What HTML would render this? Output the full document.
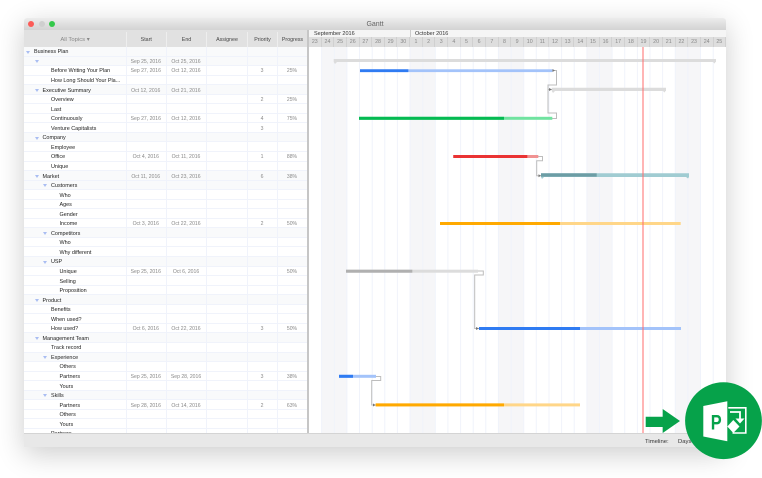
<!DOCTYPE html>
<html><head><meta charset="utf-8"><title>Gantt</title>
<style>
html,body{margin:0;padding:0;width:762px;height:478px;background:#fff;overflow:hidden;font-family:"Liberation Sans",sans-serif}
#win{position:absolute;left:24px;top:18px;width:702px;height:429px;background:#fff;box-shadow:0 7px 28px rgba(0,0,0,.2);overflow:hidden;border-radius:3px 3px 0 0;filter:blur(.25px)}
#win{overflow:visible}
#win>*{position:absolute}
#tb{left:0;top:0;width:702px;height:12px;background:linear-gradient(#ececec,#d3d3d3);border-radius:3px 3px 0 0}
.l{position:absolute;top:2.7px;width:6px;height:6px;border-radius:50%}
#ttl{position:absolute;left:0;width:702px;text-align:center;top:2px;font-size:7px;line-height:9px;color:#666}
#hd{left:0;top:12px;width:283px;height:17px;background:#e1e1e1;font-size:5.3px;color:#444;line-height:17px}
#hd span{position:absolute;top:1.5px;height:15.5px;text-align:center;border-left:1px solid #eee;box-sizing:border-box}
#rows{left:0;top:29px;width:283px;height:386px;overflow:hidden;font-size:5.45px;line-height:9.55px;color:#222}
.r{position:relative;height:9.55px;box-sizing:border-box;border-bottom:1px solid #f0f3fb;white-space:nowrap}
.g{background:#f9fafb}
.r b{font-weight:normal;position:absolute;top:1.4px}
.r i{font-style:normal;position:absolute;top:1.4px;color:#888;text-align:center;font-size:5.1px}
.s{left:101.5px;width:40.5px}.e{left:142px;width:40px}.p{left:223px;width:30px}.q{left:253px;width:30px}
.a:before{content:"";position:absolute;top:2.2px;margin-left:-7.8px;border:2px solid transparent;border-top:3px solid #a9bdf2;border-bottom:0}
.v{position:absolute;top:29px;width:1px;height:386px;background:#f0f3fb}
#sp{left:283px;top:12px;width:2px;height:403px;background:#c6c6c6}
#mo{left:285px;top:12px;width:417px;height:7px;background:#f5f5f5;font-size:5.5px;line-height:8.5px;color:#333}
#mo span{position:absolute;top:0}
#dy{left:285px;top:19px;width:417px;height:10px;display:flex;background:#dedede}
#dy span{flex:1;text-align:center;font-size:5.3px;line-height:10.5px;color:#888;border-right:1px solid #d0d0d0;box-sizing:border-box}
#ch{left:285px;top:29px}
#ft{left:0;top:415px;width:702px;height:14px;background:#e8e8e8;border-top:1px solid #d4d4d4;box-sizing:border-box;font-size:5.9px;line-height:17px;color:#333}
#ft span{position:absolute;top:0}
#ic{position:absolute;left:640px;top:378px}
</style></head><body>
<div id="win">
<div id="tb"><div class="l" style="left:4.3px;background:#fc5b57"></div><div class="l" style="left:14.5px;background:#cfcfcf"></div><div class="l" style="left:24.7px;background:#34c84a"></div><div id="ttl">Gantt</div></div>
<div id="hd"><span style="left:0;width:102px;border:0;color:#888;font-size:5.9px">All Topics &#9662;</span><span style="left:101.5px;width:40.5px">Start</span><span style="left:142px;width:40px">End</span><span style="left:182px;width:41px">Assignee</span><span style="left:223px;width:30px">Priority</span><span style="left:253px;width:30px">Progress</span></div>
<div id="rows">
<div class="r g"><b class="a" style="left:10px">Business Plan</b></div>
<div class="r g"><b class="a" style="left:18.5px"></b><i class="s">Sep 25, 2016</i><i class="e">Oct 25, 2016</i></div>
<div class="r"><b style="left:27px">Before Writing Your Plan</b><i class="s">Sep 27, 2016</i><i class="e">Oct 12, 2016</i><i class="p">3</i><i class="q">25%</i></div>
<div class="r"><b style="left:27px">How Long Should Your Pla...</b></div>
<div class="r g"><b class="a" style="left:18.5px">Executive Summary</b><i class="s">Oct 12, 2016</i><i class="e">Oct 21, 2016</i></div>
<div class="r"><b style="left:27px">Overview</b><i class="p">2</i><i class="q">25%</i></div>
<div class="r"><b style="left:27px">Last</b></div>
<div class="r"><b style="left:27px">Continuously</b><i class="s">Sep 27, 2016</i><i class="e">Oct 12, 2016</i><i class="p">4</i><i class="q">75%</i></div>
<div class="r"><b style="left:27px">Venture Capitalists</b><i class="p">3</i></div>
<div class="r g"><b class="a" style="left:18.5px">Company</b></div>
<div class="r"><b style="left:27px">Employee</b></div>
<div class="r"><b style="left:27px">Office</b><i class="s">Oct 4, 2016</i><i class="e">Oct 11, 2016</i><i class="p">1</i><i class="q">88%</i></div>
<div class="r"><b style="left:27px">Unique</b></div>
<div class="r g"><b class="a" style="left:18.5px">Market</b><i class="s">Oct 11, 2016</i><i class="e">Oct 23, 2016</i><i class="p">6</i><i class="q">38%</i></div>
<div class="r g"><b class="a" style="left:27px">Customers</b></div>
<div class="r"><b style="left:35.5px">Who</b></div>
<div class="r"><b style="left:35.5px">Ages</b></div>
<div class="r"><b style="left:35.5px">Gender</b></div>
<div class="r"><b style="left:35.5px">Income</b><i class="s">Oct 3, 2016</i><i class="e">Oct 22, 2016</i><i class="p">2</i><i class="q">50%</i></div>
<div class="r g"><b class="a" style="left:27px">Competitors</b></div>
<div class="r"><b style="left:35.5px">Who</b></div>
<div class="r"><b style="left:35.5px">Why different</b></div>
<div class="r g"><b class="a" style="left:27px">USP</b></div>
<div class="r"><b style="left:35.5px">Unique</b><i class="s">Sep 25, 2016</i><i class="e">Oct 6, 2016</i><i class="q">50%</i></div>
<div class="r"><b style="left:35.5px">Selling</b></div>
<div class="r"><b style="left:35.5px">Proposition</b></div>
<div class="r g"><b class="a" style="left:18.5px">Product</b></div>
<div class="r"><b style="left:27px">Benefits</b></div>
<div class="r"><b style="left:27px">When used?</b></div>
<div class="r"><b style="left:27px">How used?</b><i class="s">Oct 6, 2016</i><i class="e">Oct 22, 2016</i><i class="p">3</i><i class="q">50%</i></div>
<div class="r g"><b class="a" style="left:18.5px">Management Team</b></div>
<div class="r"><b style="left:27px">Track record</b></div>
<div class="r g"><b class="a" style="left:27px">Experience</b></div>
<div class="r"><b style="left:35.5px">Others</b></div>
<div class="r"><b style="left:35.5px">Partners</b><i class="s">Sep 25, 2016</i><i class="e">Sep 28, 2016</i><i class="p">3</i><i class="q">38%</i></div>
<div class="r"><b style="left:35.5px">Yours</b></div>
<div class="r g"><b class="a" style="left:27px">Skills</b></div>
<div class="r"><b style="left:35.5px">Partners</b><i class="s">Sep 28, 2016</i><i class="e">Oct 14, 2016</i><i class="p">2</i><i class="q">63%</i></div>
<div class="r"><b style="left:35.5px">Others</b></div>
<div class="r"><b style="left:35.5px">Yours</b></div>
<div class="r"><b style="left:27px">Partners</b></div>
</div>
<div class="v" style="left:101.5px"></div><div class="v" style="left:142px"></div><div class="v" style="left:182px"></div><div class="v" style="left:223px"></div><div class="v" style="left:253px"></div>
<div id="sp"></div>
<div id="mo"><span style="left:5px">September 2016</span><span style="left:106px">October 2016</span><span style="left:101px;width:1px;height:7px;background:#ccc"></span></div>
<div id="dy"><span>23</span><span>24</span><span>25</span><span>26</span><span>27</span><span>28</span><span>29</span><span>30</span><span>1</span><span>2</span><span>3</span><span>4</span><span>5</span><span>6</span><span>7</span><span>8</span><span>9</span><span>10</span><span>11</span><span>12</span><span>13</span><span>14</span><span>15</span><span>16</span><span>17</span><span>18</span><span>19</span><span>20</span><span>21</span><span>22</span><span>23</span><span>24</span><span>25</span></div>
<svg id="ch" width="417" height="386" viewBox="309 47 417 386" xmlns="http://www.w3.org/2000/svg">
<g fill="#f6f6f8">
<rect x="321.6" y="47" width="25.3" height="386"/><rect x="410" y="47" width="25.3" height="386"/><rect x="498.4" y="47" width="25.3" height="386"/><rect x="586.9" y="47" width="25.3" height="386"/><rect x="675.3" y="47" width="25.3" height="386"/>
</g>
<path stroke="#f0f3fb" stroke-width="1" d="M321.6 47V433M334.3 47V433M346.9 47V433M359.5 47V433M372.2 47V433M384.8 47V433M397.4 47V433M410 47V433M422.7 47V433M435.3 47V433M447.9 47V433M460.6 47V433M473.2 47V433M485.8 47V433M498.4 47V433M511.1 47V433M523.7 47V433M536.3 47V433M549 47V433M561.6 47V433M574.2 47V433M586.9 47V433M599.5 47V433M612.1 47V433M624.7 47V433M637.4 47V433M650 47V433M662.6 47V433M675.3 47V433M687.9 47V433M700.5 47V433M713.2 47V433"/>
<!-- connectors -->
<g fill="none" stroke="#bdbdbd" stroke-width="1">
<path d="M552 70.5H556.5V85H548V113H556.5V118.5H552"/>
<path d="M548 89.5H552"/>
<path d="M538 156.5H542.5V160.7H536.7V175.7H541"/>
<path d="M478 271H483.3V275H474.7V328.5H479"/>
<path d="M376 376.5H380.7V380.5H371.7V405H375.7"/>
</g>
<g fill="#777">
<path d="M552.5 69L555 70.5L552.5 72Z"/><path d="M549 88L552 89.5L549 91Z"/><path d="M538.5 174.2L541 175.7L538.5 177.2Z"/><path d="M476 327L479 328.5L476 330Z"/><path d="M373 403.5L375.7 405L373 406.5Z"/>
</g>
<!-- summary bars -->
<path fill="#dcdcdc" d="M333.7 59H716V62H715.5L714.5 63.5L713 62H337L335 64L333.7 62Z"/>
<path fill="#dcdcdc" d="M551.7 87.7H666V91H665.5L664.5 92.5L663 91H555L553 93L551.7 91Z"/>
<path fill="#a0ccd2" d="M541 173.3H689V177L688 178.5L686 177H544L542 179L541 177Z"/>
<!-- bars -->
<rect x="360" y="69.3" width="192.3" height="2.8" fill="#a3c3fa"/><rect x="360" y="69.3" width="48.3" height="2.8" fill="#2f7bf2"/>
<rect x="359" y="116.8" width="193.3" height="3" fill="#70e3a0"/><rect x="359" y="116.8" width="145" height="3" fill="#05ba52"/>
<rect x="453.3" y="155" width="85" height="3" fill="#f09292"/><rect x="453.3" y="155" width="74" height="3" fill="#ea3333"/>
<rect x="541" y="173.3" width="55.7" height="3.4" fill="#6c9da5"/>
<rect x="440" y="222" width="240.7" height="3" fill="#ffd688"/><rect x="440" y="222" width="120" height="3" fill="#ffa900"/>
<rect x="346" y="269.7" width="132" height="3" fill="#dcdcdc"/><rect x="346" y="269.7" width="66.3" height="3" fill="#b0b0b0"/>
<rect x="479" y="327" width="202" height="3" fill="#a3c3fa"/><rect x="479" y="327" width="101" height="3" fill="#2f7bf2"/>
<rect x="339" y="374.8" width="37" height="3" fill="#a3c3fa"/><rect x="339" y="374.8" width="14" height="3" fill="#2f7bf2"/>
<rect x="375.7" y="403.4" width="204.3" height="3" fill="#ffd688"/><rect x="375.7" y="403.4" width="128.3" height="3" fill="#ffa900"/>
<rect x="642" y="47" width="2" height="386" fill="#ff6b6b" fill-opacity=".5"/>
</svg>
<div id="ft"><span style="left:621px">Timeline:</span><span style="left:654px">Days</span></div>
</div>
<svg id="ic" width="122" height="86" viewBox="640 378 122 86" xmlns="http://www.w3.org/2000/svg">
<path fill="#06a24a" d="M645.7 416.7H662.7V409L680 421L662.7 433V427H645.7Z"/>
<circle cx="723.5" cy="420.7" r="38.4" fill="#06a24a"/>
<path fill="#fff" d="M703.3 406L727.3 401.3V441.3L703.3 436.5Z"/>
<text transform="translate(710.8 429.5) scale(.78 1)" font-family="Liberation Sans, sans-serif" font-size="21" font-weight="bold" fill="#06a24a">P</text>
<path fill="none" stroke="#fff" stroke-width="1.6" d="M728.3 407.8H745.8V433H732.5"/>
<path fill="none" stroke="#fff" stroke-width="1.8" d="M730 412H740V419"/>
<path fill="#fff" d="M735.5 418.5H744.5L740 423.5Z"/>
<path fill="#fff" d="M733.3 420L739.5 426.5L733.3 433L727.3 426.5Z"/>
</svg>
</body></html>
